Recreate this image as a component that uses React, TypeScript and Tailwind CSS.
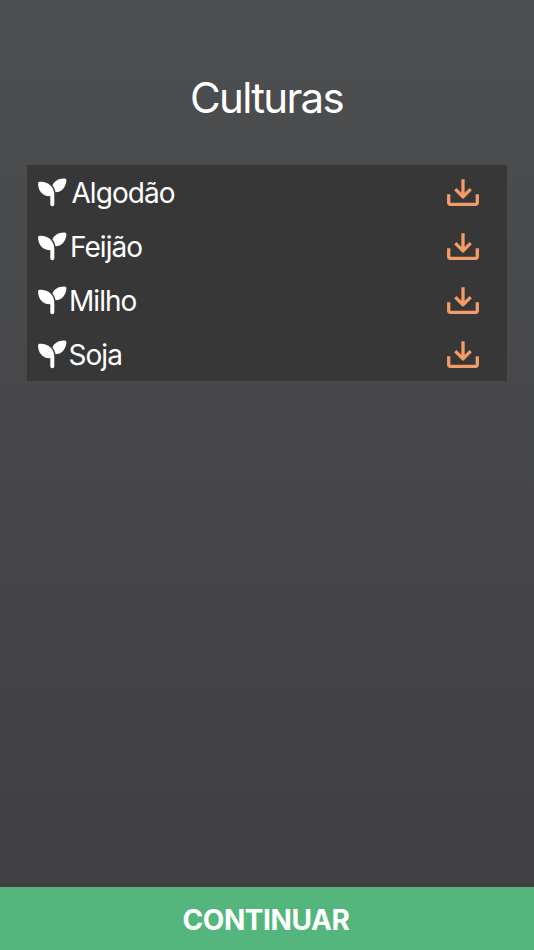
import React from "react";

const crops = [
  { name: "Algodão", spacing: "ml-[5.5px]" },
  { name: "Feijão", spacing: "ml-[4px]" },
  { name: "Milho", spacing: "ml-[3px]" },
  { name: "Soja", spacing: "ml-[2.5px]" },
];

const SeedlingIcon: React.FC<{}> = () => (
  <svg
    viewBox="0 0 28 28"
    className="h-7 w-7 shrink-0 overflow-visible"
    fill="currentColor"
  >
    <path d="M1.600 3.800C10 3.300 16.500 8.800 16.300 17V26.200a2 2 0 0 1-4 0V18.100C5.200 18.700 0 13 .100 5.400.100 4.400.700 3.900 1.600 3.800Z" />
    <path d="M26 .400C28 .300 28.600 1.200 28.400 3 27.600 9.800 23.300 14.200 17.500 14.300 17 11.500 16 9.300 14.500 7.500 16 3 20.300.500 26 .400Z" />
  </svg>
);

const DownloadIcon: React.FC<{}> = () => (
  <svg
    viewBox="0 0 32 28"
    className="h-7 w-8"
    fill="none"
    stroke="currentColor"
    strokeWidth="3.3"
    strokeLinejoin="round"
  >
    <path d="M16 1.300v17M8.300 11.200l7.700 7.700L23.700 11.200M1.700 16.300v8.300q0 1.800 1.800 1.800h25q1.800 0 1.800-1.800v-8.300" />
  </svg>
);

const App: React.FC<{}> = () => {
  return (
    <div className="flex h-[950px] w-full flex-col bg-linear-to-b from-[#4d4e50] to-[#3f3f41] font-['Inter',sans-serif] text-white">
      <div className="flex-1 px-[27px] pt-[66px]">
        <h1 className="pr-px text-center text-[42px] leading-[64px] tracking-[-1.7px]">
          Culturas
        </h1>
        <ul className="mt-[35px] bg-[#373737]">
          {crops.map((crop) => (
            <li
              key={crop.name}
              className="flex h-[54px] items-center pr-7 pl-[11px] text-[28px] tracking-[-0.95px]"
            >
              <SeedlingIcon />
              <span className={"flex-1 pt-0.5 " + crop.spacing}>
                {crop.name}
              </span>
              <button className="text-[#f39c68]">
                <DownloadIcon />
              </button>
            </li>
          ))}
        </ul>
      </div>
      <button className="h-[63px] bg-[#54b67d] pt-0.5 pr-0.5 text-[28px] font-bold tracking-[-0.4px]">
        CONTINUAR
      </button>
    </div>
  );
};

export default App;
